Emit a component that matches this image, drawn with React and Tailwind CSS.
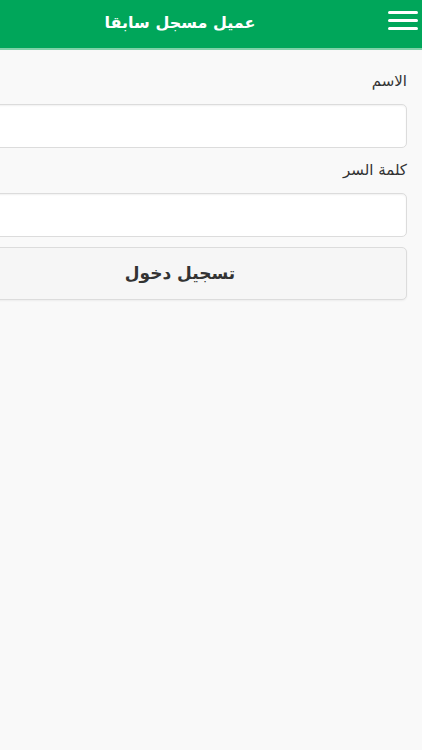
import React from 'react';

const Field = ({ label, type = 'text' }) => (
  <div className="flex flex-col">
    <label className="h-[35px] pt-[12px] text-[15px] leading-[20px] text-[#333]">{label}</label>
    <input
      type={type}
      className="mt-[10px] h-[44px] w-full rounded-[5px] border border-[#dcdcdc] bg-white shadow-[inset_0_1px_2px_rgba(0,0,0,0.06)] outline-none"
    />
  </div>
);

export default function App() {
  return (
    <div className="flex h-[750px] w-[422px] justify-end overflow-hidden bg-[#f9f9f9] font-['DejaVu_Sans',sans-serif]">
      <div dir="rtl" className="w-[484px] shrink-0">
        <header className="flex h-[48px] items-start bg-[#00a65a] px-[4px] pt-[11px]">
          <button type="button" className="flex w-[30px] flex-col gap-[5px]">
            <span className="h-[3px] w-full rounded-full bg-white" />
            <span className="h-[3px] w-full rounded-full bg-white" />
            <span className="h-[3px] w-full rounded-full bg-white" />
          </button>
          <h1 className="flex-1 pl-[30px] pt-[1px] text-center text-[16px] leading-[22px] font-bold text-white">عميل مسجل سابقا</h1>
        </header>
        <div className="h-[2px] bg-[#7fd1a8]" />

        <form className="flex flex-col px-[15px] pt-[9px]">
          <Field label="الاسم" />
          <Field label="كلمة السر" type="password" />
          <button
            type="button"
            className="mt-[10px] h-[53px] w-full rounded-[5px] border border-[#dcdcdc] bg-[#f6f6f6] text-[17px] font-bold text-[#333] shadow-[0_1px_2px_rgba(0,0,0,0.05)]"
          >
            تسجيل دخول
          </button>
        </form>
      </div>
    </div>
  );
}
